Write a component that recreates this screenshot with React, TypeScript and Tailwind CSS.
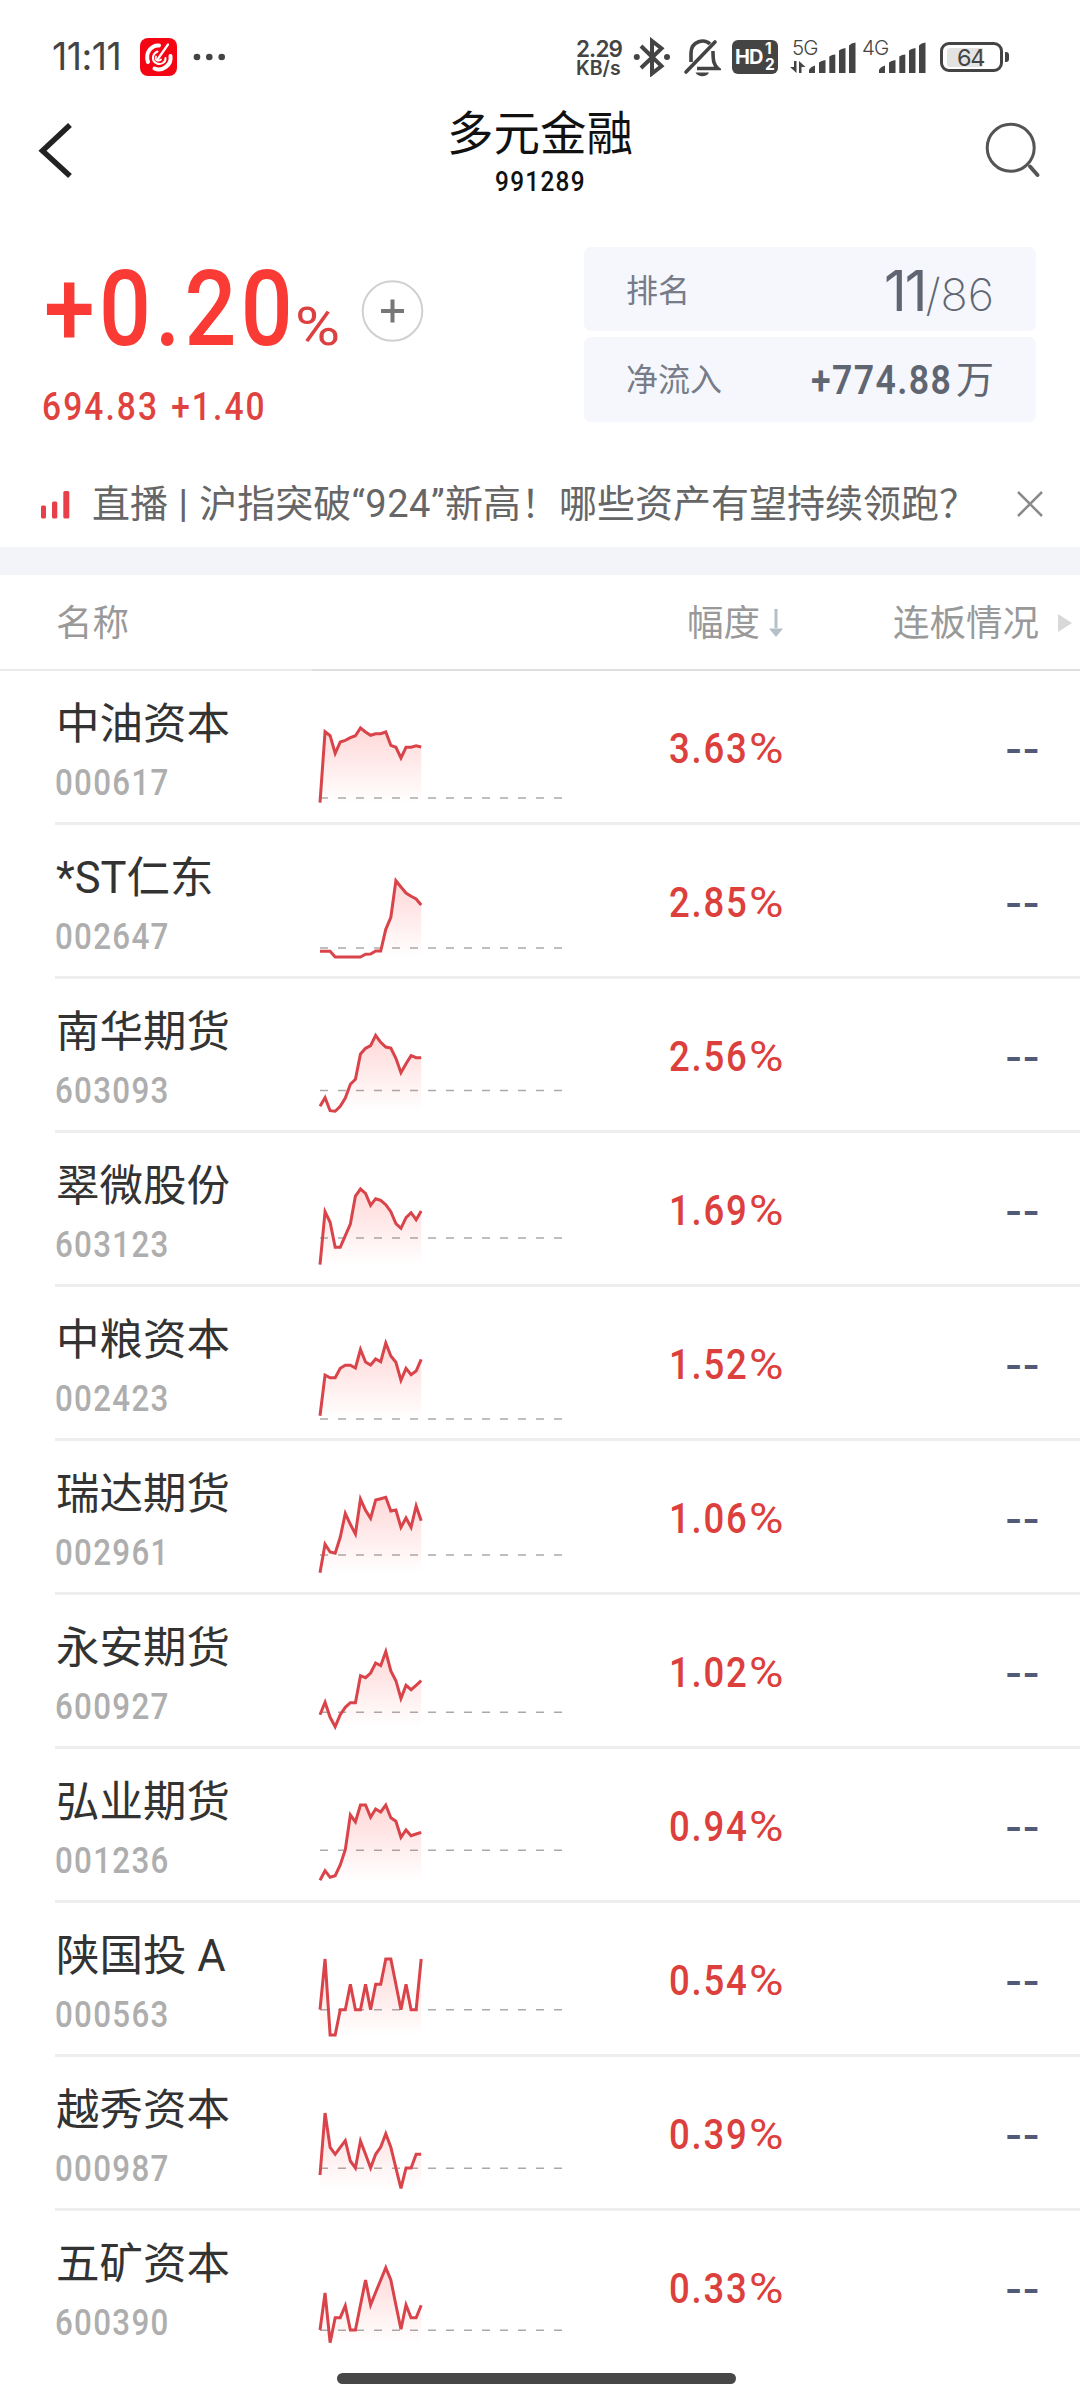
import React from 'react';

interface Stock {
  name: string;
  code: string;
  change: string;
  // dashed previous-close line, px from the top of the row
  base: number;
  points: number[];
}

const stocks: Stock[] = [
  { name: '中油资本', code: '000617', change: '3.63', base: 127, points: [131.7, 60.7, 64.7, 82.3, 71, 69.3, 66.7, 64.7, 57, 61, 64.3, 62.7, 62.7, 61, 74.3, 76.3, 87, 76.3, 76.3, 74.7, 76] },
  { name: '*ST仁东', code: '002647', change: '2.85', base: 123, points: [126.3, 126.3, 126.3, 132, 132, 132, 132, 132, 132, 129.3, 129, 126, 126, 104.3, 92.3, 55.7, 62, 68, 71.3, 74, 80] },
  { name: '南华期货', code: '603093', change: '2.56', base: 111.5, points: [127.3, 118.7, 131.7, 132.3, 127.3, 119, 105.3, 100.3, 75, 69.3, 66.7, 56.3, 63.3, 68, 69, 79.3, 93.7, 84.7, 76.7, 78.7, 78.7] },
  { name: '翠微股份', code: '603123', change: '1.69', base: 105, points: [131.7, 78.7, 89.3, 114.3, 114.3, 102.7, 91, 63, 56, 60.3, 72.3, 65.7, 67.3, 71.7, 78.7, 90.7, 95.3, 84.7, 79.7, 86.7, 78] },
  { name: '中粮资本', code: '002423', change: '1.52', base: 132, points: [128.7, 88, 90.7, 90.7, 81.3, 78.3, 78.3, 81, 62.5, 75, 78, 72, 74.7, 56, 69, 75.3, 93.3, 81.3, 87.7, 84, 72.3] },
  { name: '瑞达期货', code: '002961', change: '1.06', base: 114, points: [131.7, 103.3, 111, 112.3, 96.3, 72.5, 83.3, 93, 58, 69.3, 77.3, 59, 57.7, 56.3, 70, 69, 86.3, 77, 86.3, 65, 79.7] },
  { name: '永安期货', code: '600927', change: '1.02', base: 117.3, points: [119.7, 107.3, 122.3, 131.7, 119.7, 112.3, 107.7, 107.7, 80.7, 82.7, 78, 68, 70.7, 56.5, 76, 85.7, 103.5, 90.3, 94.7, 90.3, 85.7] },
  { name: '弘业期货', code: '001236', change: '0.94', base: 101.3, points: [131.3, 121.7, 128.3, 126.7, 116, 100.7, 66, 73, 56, 56, 68.3, 60, 63, 56, 68.7, 72.3, 88.3, 81, 86.7, 85, 83.3] },
  { name: '陕国投 A', code: '000563', change: '0.54', base: 106.7, points: [106.7, 56, 132, 132, 106.7, 106.7, 81.3, 106.7, 106.7, 81.3, 106.7, 81.3, 81.3, 56, 56, 81.3, 106.7, 81.3, 106.7, 106.7, 56] },
  { name: '越秀资本', code: '000987', change: '0.39', base: 111.3, points: [118, 56, 90.3, 97.3, 90.3, 83.7, 104, 111, 84, 97.3, 111, 97.3, 90, 76.7, 90.3, 111, 131.3, 111, 111, 97.3, 97.3] },
  { name: '五矿资本', code: '600390', change: '0.33', base: 119.3, points: [119, 82, 131.7, 106.7, 106.7, 94.7, 119, 119, 94, 69, 94, 81.3, 69, 56.7, 69, 94, 118.3, 94, 106.7, 106.7, 94.3] },
];

// Narrow, widely spaced figures; size and tracking come from the caller
const Figures: React.FC<{ className?: string; children: React.ReactNode }> = ({ className = '', children }) => (
  <span className={`inline-block origin-left scale-x-[0.87] whitespace-nowrap font-['Roboto'] ${className}`}>{children}</span>
);

const SignalBars: React.FC<{ className?: string }> = ({ className }) => (
  <svg className={className} width="48" height="32" viewBox="0 0 48 32" fill="#444">
    <path d="M1 31V27.5Q3 24.5 7 23.5V31Z" />
    <path d="M11 31V20.5Q13 18.5 17.500 18V31Z" />
    <path d="M21.300 31V14.500Q24 12.500 27.300 12.500V31Z" />
    <path d="M31 31V8.500Q33 6.500 37.500 6V31Z" />
    <path d="M41 31V3.500Q43 1 47.500 .6V31Z" />
  </svg>
);

const StatusBar = () => (
  <div className="flex h-[96px] items-start pt-[37px] font-['Inter'] text-[#444]">
    <div className="ml-[52px] w-[88px] text-[37.5px] leading-[40px] tracking-[-0.5px]">11:11</div>
    <svg className="mt-[1px]" width="37" height="38" viewBox="0 0 37 38">
      <rect width="37" height="38" rx="8" fill="#f50514" />
      <g fill="none" stroke="#fff" strokeLinecap="round">
        <path d="M19 7.500C11 7 5 15 8 24" strokeWidth="4" />
        <path d="M14.500 30.500C22 34 32 27 30.500 18" strokeWidth="4" />
        <path d="M17.500 13.500C12 16 11 23 17 25.500C21 27 26 24.500 25.500 20" strokeWidth="2" />
        <path d="M17.500 21.500L28 6.500" strokeWidth="2.200" />
        <path d="M16 18.500C14.500 22 18 24 21 21.500" strokeWidth="1.800" />
      </g>
    </svg>
    <svg className="ml-[16px] mt-[16px]" width="33" height="8" viewBox="0 0 33 8" fill="#444">
      <circle cx="4" cy="4" r="3.300" />
      <circle cx="16.300" cy="4" r="3.300" />
      <circle cx="28.700" cy="4" r="3.300" />
    </svg>
    <div className="ml-auto w-[57px] pt-[2px] font-semibold">
      <div className="text-[22.5px] leading-[20px] tracking-[-0.9px]">2.29</div>
      <div className="text-[19.5px] leading-[19px]">KB/s</div>
    </div>
    <svg width="38" height="40" viewBox="0 0 38 40" fill="none" stroke="#444" strokeWidth="4">
      <path d="M8 9L28.500 29L19 36.500V4L28.500 11.500L8 31" />
      <circle cx="3.800" cy="20" r="3" fill="#444" stroke="none" />
      <circle cx="34" cy="20" r="3" fill="#444" stroke="none" />
    </svg>
    <svg className="ml-[12px]" width="38" height="40" viewBox="0 0 38 40" fill="none" stroke="#444" strokeWidth="3.600">
      <path d="M3 35L32 5" strokeLinecap="round" />
      <path d="M8 25V16C8 4 22 1 27 7" />
      <path d="M30 14C30 25 31 28 35 31.500H14" />
      <path d="M12.500 35.500H26C24 40.500 15 40.500 12.500 35.500Z" fill="#444" stroke="none" />
    </svg>
    <div className="ml-[11px] mt-[3px] flex h-[34px] w-[46px] rounded-[6px] bg-[#444] pl-[3px] font-bold text-white">
      <span className="w-[30px] text-[20px] leading-[35px] tracking-[-1px]">HD</span>
      <span className="flex flex-col pt-[1px] text-[15.5px] leading-[16px]">
        <span>1</span>
        <span>2</span>
      </span>
    </div>
    <div className="relative ml-[30px] h-[40px] w-[48px]">
      <span className="absolute left-[-16px] top-0 text-[20.5px] font-light leading-[21px] tracking-[-1px]">5G</span>
      <svg className="absolute left-[-18px] top-[24px]" width="16" height="12" viewBox="0 0 16 12" fill="#444">
        <path d="M4 0H6.500V12L0 6H4Z" />
        <path d="M11.500 12H9V0L15.500 6H11.500Z" />
      </svg>
      <SignalBars className="mt-[5px]" />
    </div>
    <div className="relative ml-[22px] h-[40px] w-[48px]">
      <span className="absolute left-[-16px] top-0 text-[20.5px] font-light leading-[21px] tracking-[-1px]">4G</span>
      <SignalBars className="mt-[5px]" />
    </div>
    <div className="ml-[14px] mt-[5px] flex h-[30px] w-[63px] items-center rounded-[9px] border-[3px] border-[#444] pl-[4px]">
      <div className="flex h-[19px] w-[36px] items-center rounded-l-[3px] bg-[#e3e3e3] pl-[10px] text-[23.5px] leading-[19px] tracking-[-1.2px]">64</div>
    </div>
    <div className="ml-[2px] mr-[71px] mt-[15px] h-[10px] w-[4px] rounded-r-[3px] bg-[#444]" />
  </div>
);

const TitleBar = () => (
  <div className="flex h-[151px] items-start justify-between">
    <div className="w-[96px] pl-[37px] pt-[25px]">
      <svg width="36" height="60" viewBox="0 0 36 60" fill="none" stroke="#222" strokeWidth="5.500">
        <path d="M33 4L5.500 29.700L33 55" />
      </svg>
    </div>
    <div className="flex flex-col items-center pt-[10px] text-[#111]">
      <div className="text-[46.5px] leading-[54px]">多元金融</div>
      <div className="w-[91px] pt-[7px]">
        <Figures className="text-[28px] font-medium leading-[30px] tracking-[1.5px]">991289</Figures>
      </div>
    </div>
    <div className="w-[96px] pt-[25px]">
      <svg width="58" height="58" viewBox="0 0 58 58" fill="none" stroke="#555" strokeWidth="3">
        <circle cx="26.700" cy="26.700" r="23.500" />
        <path d="M46 45.500L53.500 54" strokeWidth="4" strokeLinecap="round" />
      </svg>
    </div>
  </div>
);

const Summary = () => (
  <div className="flex h-[216px] items-start">
    <div className="w-[584px] pl-[42px]">
      <div className="flex h-[120px] items-start font-['Roboto']">
        <div className="w-[253px] pl-[2px]">
          <Figures className="text-[105px] font-medium leading-[126px] tracking-[4.8px] text-[#f93a35]">+0.20</Figures>
        </div>
        <div className="w-[66px] pt-[50px]">
          <span className="inline-block origin-left scale-x-[1.14] text-[54px] leading-[60px] text-[#dd4040]">%</span>
        </div>
        <svg className="mt-[32px]" width="64" height="64" viewBox="0 0 64 64" fill="none">
          <circle cx="31.500" cy="32" r="29.800" stroke="#d0d0d0" strokeWidth="2" />
          <path d="M20 32H43M31.500 20.500V43.500" stroke="#777" strokeWidth="4" />
        </svg>
      </div>
      <Figures className="mt-[18px] text-[38.500px] font-medium leading-[44px] tracking-[2.4px] text-[#e04240] [word-spacing:2px]">694.83 +1.40</Figures>
    </div>
    <div className="flex w-[452px] flex-col gap-[6px] text-[32px] text-[#777c88]">
      <div className="flex h-[84px] items-center justify-between rounded-[7px] bg-[#f5f7fc] px-[42px] pt-[3px]">
        <span>排名</span>
        <span className="font-['Inter'] text-[56px] text-[#5f6672]">
          <span className="tracking-[-2px]">11</span>
          <span className="text-[45px] font-extralight">/86</span>
        </span>
      </div>
      <div className="flex h-[85px] items-center justify-between rounded-[7px] bg-[#f5f7fc] px-[42px]">
        <span>净流入</span>
        <div className="flex w-[183px] items-center justify-between text-[38px] text-[#5f6672]">
          <div className="w-[144px] pt-[2px]">
            <Figures className="text-[41px] font-semibold leading-[48px] tracking-[1.6px]">+774.88</Figures>
          </div>
          <span>万</span>
        </div>
      </div>
    </div>
  </div>
);

const LiveBanner = () => (
  <div className="flex h-[84px] items-center text-[38px] text-[#666]">
    <svg className="ml-[41px]" width="29" height="28" viewBox="0 0 29 28" fill="#e8404a">
      <rect x="0" y="14.500" width="5" height="13" rx="1.500" />
      <rect x="11" y="10.500" width="5.300" height="17" rx="1.500" />
      <rect x="22.300" y="0" width="6" height="27.500" rx="1.500" />
    </svg>
    <span className="ml-[22px] whitespace-nowrap pb-[2px] font-['Roboto','Noto_Sans_CJK_SC',sans-serif]">
      直播<span className="font-medium tracking-[1px]"> | </span>沪指突破<span className="tracking-[0.5px]">“924”</span>新高！哪些资产有望持续领跑？
    </span>
    <svg className="mb-[2px] ml-auto mr-[37px]" width="26" height="26" viewBox="0 0 26 26" stroke="#8a8a8a" strokeWidth="2.500">
      <path d="M1 1L25 25M25 1L1 25" />
    </svg>
  </div>
);

const TableHeader = () => (
  <div>
    <div className="flex h-[94px] items-center pt-[2px] text-[36.5px] text-[#999]">
      <span className="w-[630px] pl-[56px]">名称</span>
      <span className="w-[130px] text-right">幅度</span>
      <svg className="ml-[9px]" width="14" height="28" viewBox="0 0 14 28" fill="#b4c0c8">
        <path d="M5.500 0H8.500V19H5.500Z" />
        <path d="M0 19.500H14L7 28Z" />
      </svg>
      <span className="w-[256px] text-right">连板情况</span>
      <svg className="ml-[19px]" width="14" height="18" viewBox="0 0 14 18" fill="#d8d8d8">
        <path d="M0 0L14 9L0 18Z" />
      </svg>
    </div>
    <div className="flex h-[2px]">
      <div className="w-[312px] bg-[#eaeaea]" />
      <div className="flex-1 bg-[#dfdfdf]" />
    </div>
  </div>
);

const Sparkline: React.FC<{ stock: Stock }> = ({ stock }) => {
  const step = 5.06;
  const line = stock.points.map((y, i) => `${(2 + i * step).toFixed(2)},${y}`).join(' ');
  const lastX = 2 + (stock.points.length - 1) * step;

  return (
    <svg className="shrink-0" width="250" height="151" viewBox="0 0 250 151" fill="none">
      <defs>
        <linearGradient id={`fill-${stock.code}`} gradientUnits="userSpaceOnUse" x1="0" y1="50" x2="0" y2="132">
          <stop offset="0" stopColor="#ff3c3c" stopOpacity="0.22" />
          <stop offset="1" stopColor="#ff3c3c" stopOpacity="0" />
        </linearGradient>
      </defs>
      <path d={`M2 ${stock.base}H244`} stroke="#aaa" strokeWidth="1.500" strokeDasharray="8 10" />
      <polygon points={`2,132 ${line} ${lastX},132`} fill={`url(#fill-${stock.code})`} />
      <polyline points={line} stroke="#d9434a" strokeWidth="3" />
    </svg>
  );
};

const StockRow: React.FC<{ stock: Stock; last: boolean }> = ({ stock, last }) => (
  <div className={`ml-[55px] flex h-[154px] items-start ${last ? '' : 'border-b-[3px] border-[#eee]'}`}>
    <div className="w-[263px] pt-[26px]">
      <div className="whitespace-nowrap pl-[1px] font-['Roboto','Noto_Sans_CJK_SC',sans-serif] text-[43.5px] leading-[56px] text-[#333]">{stock.name}</div>
      <Figures className="mt-[8px] text-[36px] font-medium leading-[44px] tracking-[1.5px] text-[#aeaeae]">{stock.code}</Figures>
    </div>
    <Sparkline stock={stock} />
    <div className="flex w-[216px] pl-[101px] pt-[53px] font-['Roboto'] text-[42px] font-medium leading-[50px] text-[#dc403c]">
      <div className="w-[80px]">
        <Figures className="tracking-[2px]">{stock.change}</Figures>
      </div>
      <span className="origin-left scale-x-[1.12] font-normal">%</span>
    </div>
    <div className="w-[256px] pt-[53px] text-right font-['Inter'] text-[38px] font-semibold leading-[50px] text-[#535a78]">--</div>
  </div>
);

export default function App() {
  return (
    <div className="flex h-[2400px] w-[1080px] flex-col overflow-hidden bg-white font-['Inter','Noto_Sans_CJK_SC',sans-serif]">
      <StatusBar />
      <TitleBar />
      <Summary />
      <LiveBanner />
      <div className="h-[28px] shrink-0 bg-[#f3f4f9]" />
      <TableHeader />
      {stocks.map((stock, i) => (
        <StockRow key={stock.code} stock={stock} last={i === stocks.length - 1} />
      ))}
      <div className="ml-[337px] mt-[8px] h-[11px] w-[399px] shrink-0 rounded-full bg-[#474747]" />
    </div>
  );
}
